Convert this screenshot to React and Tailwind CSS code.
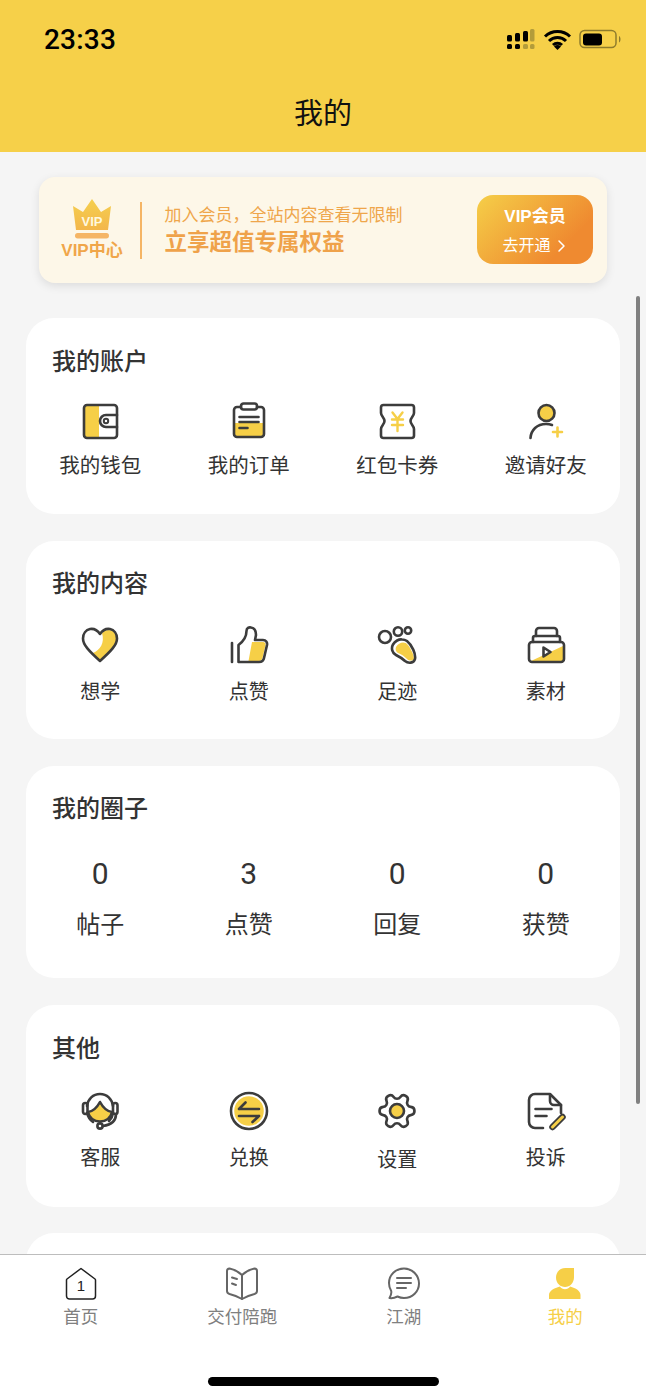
import React from 'react';

const font = { fontFamily: '"Liberation Sans", "Noto Sans CJK SC", sans-serif' };
const DARK = '#3c3c3c';
const YELLOW = '#f6cf47';

const Svg = ({ children, size = 40 }) => (
    <svg width={size} height={size} viewBox={`0 0 ${size} ${size}`} fill="none" stroke={DARK} strokeWidth="2.600" strokeLinecap="round" strokeLinejoin="round">
        {children}
    </svg>
);

const WalletIcon = () => (
    <Svg>
        <rect x="4" y="4" width="15" height="33" fill={YELLOW} stroke="none" />
        <rect x="4" y="4" width="33" height="33" rx="3" />
        <path d="M37 14H26a6 6 0 0 0 0 12h11" />
        <circle cx="26" cy="20" r="2.200" strokeWidth="2" />
    </Svg>
);

const OrderIcon = () => (
    <Svg>
        <path d="M5 22h30v11a3 3 0 0 1-3 3H8a3 3 0 0 1-3-3z" fill={YELLOW} stroke="none" />
        <path d="M12 6H8a3 3 0 0 0-3 3v24a3 3 0 0 0 3 3h24a3 3 0 0 0 3-3V9a3 3 0 0 0-3-3h-4" />
        <rect x="12" y="2.500" width="16" height="6" rx="2.500" />
        <path d="M10.500 16h19M10.500 21h19M10.500 27h8" />
    </Svg>
);

const TicketIcon = () => (
    <Svg>
        <path d="M6.500 4h28A2.500 2.500 0 0 1 37 6.500V12c0 3-3.500 4.500-3.500 8s3.500 5 3.500 8v6.500a2.500 2.500 0 0 1-2.500 2.500h-28A2.500 2.500 0 0 1 4 34.500V28c0-3 3.500-4.500 3.500-8S4 15 4 12V6.500A2.500 2.500 0 0 1 6.500 4z" />
        <path d="M15.500 11.500l5 6.500 5-6.500M15 18.500h11M15 24h11M20.500 18.500V30" stroke={YELLOW} strokeWidth="2.400" />
    </Svg>
);

const InviteIcon = () => (
    <Svg>
        <circle cx="20.500" cy="12" r="8" fill={YELLOW} />
        <path d="M4.500 37C5 29 11 23 20 23c2.500 0 4.500.4 6 1" />
        <path d="M31.500 26.500v9M27 31h9" stroke={YELLOW} strokeWidth="2.600" />
    </Svg>
);

const HeartIcon = () => (
    <Svg>
        <path d="M22 8c4-5 15-4 15 6 0 6-5 11-17 21l-7-7c7-3 12-10 9-20z" fill={YELLOW} stroke="none" />
        <path d="M20 9C17 4.500 13 3.500 10 4 6 4.800 3 8.500 3 13.500 3 20 9 26 20 36 31 26 37 20 37 13.500 37 8.500 34 4.800 30 4c-3-.5-7 .5-10 5z" />
    </Svg>
);

const ThumbIcon = () => (
    <Svg>
        <path d="M23 17h11c2 0 3 1.500 2.500 3l-3 13c-.5 2-2 3-3.500 3H19.500z" fill={YELLOW} stroke="none" />
        <path d="M3 18v19" />
        <path d="M9.500 37V20c4-3 8-8 8-14 0-3 2.500-4 4.500-3.500 4 .5 5 4.500 5 7.500l-1 5h8c3 0 4.500 2.500 4 5l-3 13c-.5 3-3 4-5 4z" />
    </Svg>
);

const PawIcon = () => (
    <Svg>
        <path d="M19 22c3-5 9-6 12-2 3 4 6 10 6 14-1 2-5 2-7 0-3-3-6-5-9-6-2-1-3-4-2-6z" fill={YELLOW} stroke="none" />
        <path d="M25 14.500c-3-.5-7 1.500-9 5-2 3.500-1 8.500 3 10.500 3 1.500 6 3 9 6 3 2.500 9 2.500 10-2 1-5-3-14-8-18-1.500-1-3-1.500-5-1.500z" />
        <circle cx="8" cy="12" r="6" />
        <circle cx="21" cy="6.500" r="4.200" />
        <circle cx="31" cy="5.500" r="3.200" />
    </Svg>
);

const MaterialIcon = () => (
    <Svg>
        <path d="M5 36l32-15v15z" fill={YELLOW} stroke="none" />
        <rect x="3" y="17" width="35" height="20" rx="3" />
        <path d="M7 17v-4a2 2 0 0 1 2-2h23a2 2 0 0 1 2 2v4" />
        <path d="M10 11V6a3 3 0 0 1 3-3h15a3 3 0 0 1 3 3v5" />
        <path d="M17.500 22.500l7 4.500-7 4.500z" />
    </Svg>
);

const ServiceIcon = () => (
    <Svg>
        <path d="M8 21c5-.5 9-4.500 12-10 3 5.500 7 9.500 12 10-1 6-6 9.500-12 9.500S9 27 8 21z" fill={YELLOW} />
        <path d="M7 15C8 8 13 3 20 3s12 5 13 12" />
        <path d="M7 22c1 4 3 7 6 9M33 22c-.5 4-2 6-4 8" />
        <rect x="3" y="12" width="4.500" height="11" rx="2.200" />
        <rect x="33" y="12" width="4.500" height="11" rx="2.200" />
        <path d="M36 23c0 7-5 11-13 12" />
        <circle cx="20" cy="35" r="2.600" />
    </Svg>
);

const ExchangeIcon = () => (
    <Svg>
        <circle cx="20" cy="20" r="14.800" fill={YELLOW} stroke="none" />
        <circle cx="20" cy="20" r="18" />
        <path d="M10 18h20M10 18l6.500-6.500M30 25H10M30 25l-6.500 6" />
    </Svg>
);

const GearIcon = () => (
    <Svg>
        <g transform="translate(-1 -1) scale(1.750) rotate(90 12 12)" strokeWidth="1.500">
            <path d="M9.671 4.136a2.340 2.340 0 0 1 4.659 0 2.340 2.340 0 0 0 3.319 1.915 2.340 2.340 0 0 1 2.330 4.033 2.340 2.340 0 0 0 0 3.831 2.340 2.340 0 0 1-2.330 4.033 2.340 2.340 0 0 0-3.319 1.915 2.340 2.340 0 0 1-4.659 0 2.340 2.340 0 0 0-3.320-1.915 2.340 2.340 0 0 1-2.330-4.033 2.340 2.340 0 0 0 0-3.831A2.340 2.340 0 0 1 6.350 6.051a2.340 2.340 0 0 0 3.319-1.915" />
        </g>
        <circle cx="20" cy="20" r="7" fill={YELLOW} />
    </Svg>
);

const ComplainIcon = () => (
    <Svg>
        <path d="M17 37H9a6 6 0 0 1-6-6V9a6 6 0 0 1 6-6h15l11 11v8" />
        <path d="M24 3.500V10a4 4 0 0 0 4 4h7" />
        <path d="M9.500 18h16M9.500 25h11" />
        <path d="M26.500 36l10-10" stroke={DARK} strokeWidth="6.500" />
        <path d="M26.500 36l10-10" stroke={YELLOW} strokeWidth="3" />
    </Svg>
);

const HomeTab = () => (
    <svg width="36" height="36" viewBox="0 0 36 36" fill="none" stroke="#222" strokeWidth="1.500" strokeLinejoin="round">
        <path d="M18 2.500l14 10.500a1.500 1.500 0 0 1 .5 1.200V30a3 3 0 0 1-3 3h-23a3 3 0 0 1-3-3V14.200a1.500 1.500 0 0 1 .5-1.200z" />
        <text x="18" y="25" textAnchor="middle" fontSize="15" fill="#222" stroke="none" fontFamily="Liberation Sans, sans-serif">1</text>
    </svg>
);

const BookTab = () => (
    <svg width="36" height="36" viewBox="0 0 36 36" fill="none" stroke="#666" strokeWidth="2" strokeLinecap="round" strokeLinejoin="round">
        <path d="M18 9C15 6 10 3.500 5.500 2.500c-1.500 0-2.500 1-2.500 2.500v20c0 1.500 1 2.500 2.500 3 4.500 1 9 3 12.500 5 3.500-2 8-4 12.500-5 1.500-.5 2.500-1.500 2.500-3V5c0-1.500-1-2.500-2.500-2.500C26 3.500 21 6 18 9z" />
        <path d="M18 9v24M8 11.500l5 1.500M8 17.500l4 1.500" />
    </svg>
);

const ChatTab = () => (
    <svg width="36" height="36" viewBox="0 0 36 36" fill="none" stroke="#666" strokeWidth="2" strokeLinecap="round" strokeLinejoin="round">
        <path d="M18 2.500C9.500 2.500 3 9 3 17c0 3 .8 5.500 2 7.500.5 1 .3 4-1.500 7.500 3 .5 6-.5 8-1.500 2 1 4 1.500 6.500 1.500 8.500 0 15-6.500 15-14.500S26.500 2.500 18 2.500z" />
        <path d="M11 12h14M11 17h14M11 22h9" />
    </svg>
);

const MeTab = () => (
    <svg width="36" height="36" viewBox="0 0 36 36" fill={YELLOW}>
        <path d="M18.500 2H27v9c0 6-4 10-9 10s-9-4-9-9.500C9 6 13 2 18.500 2z" />
        <path d="M2 33v-4c0-4 5-7 11-8.500 2 3.500 8 3.500 10 0C29 22 33.500 25 33.500 29v4z" />
    </svg>
);

const StatusIcons = () => (
    <svg width="116" height="24" viewBox="0 0 116 24">
        <g fill="#000">
            <rect x="1" y="8" width="5" height="6.500" rx="1.500" />
            <rect x="9" y="6" width="5" height="8.500" rx="1.500" />
            <rect x="17" y="4" width="5" height="10.500" rx="1.500" />
            <rect x="1" y="17" width="5" height="5" rx="1.500" />
            <rect x="9" y="17" width="5" height="5" rx="1.500" />
        </g>
        <g fill="#b39c3a">
            <rect x="24" y="2" width="4.500" height="12.500" rx="1.500" />
            <rect x="17" y="17" width="5" height="5" rx="1.500" />
            <rect x="24" y="17" width="4.500" height="5" rx="1.500" />
        </g>
        <path d="M39 9.500a18 18 0 0 1 25 0M43 14a12 12 0 0 1 17 0M47 18a6.500 6.500 0 0 1 9 0" fill="none" stroke="#000" strokeWidth="3" />
        <path d="M51.500 23l-3.500-3.500a5 5 0 0 1 7 0z" fill="#000" />
        <rect x="74" y="3.500" width="36" height="17" rx="4.500" fill="none" stroke="#8f7c2c" strokeWidth="1.500" />
        <rect x="77" y="6.500" width="19" height="12" rx="3" fill="#000" />
        <path d="M113 9c2 .5 2 6 0 6.500z" fill="#8f7c2c" />
    </svg>
);

const Crown = () => (
    <svg width="40" height="40" viewBox="0 0 40 40" className="shrink-0">
        <defs>
            <linearGradient id="crown" x1="0" y1="0" x2="0" y2="1">
                <stop offset="0" stopColor="#f5d04f" />
                <stop offset="1" stopColor="#f3b64a" />
            </linearGradient>
        </defs>
        <path d="M20 0l9 13 10-6-3 24H4L1 7l10 6z" fill="url(#crown)" />
        <rect x="3" y="34" width="34" height="5.500" rx="2.700" fill="#f5b565" />
        <text x="20" y="27" textAnchor="middle" fontSize="13" fontWeight="700" fill="#fff8df" fontFamily="Liberation Sans, sans-serif">VIP</text>
    </svg>
);

const accountItems = [
    { icon: WalletIcon, label: '我的钱包' },
    { icon: OrderIcon, label: '我的订单' },
    { icon: TicketIcon, label: '红包卡券' },
    { icon: InviteIcon, label: '邀请好友' },
];

const contentItems = [
    { icon: HeartIcon, label: '想学' },
    { icon: ThumbIcon, label: '点赞' },
    { icon: PawIcon, label: '足迹' },
    { icon: MaterialIcon, label: '素材' },
];

const otherItems = [
    { icon: ServiceIcon, label: '客服' },
    { icon: ExchangeIcon, label: '兑换' },
    { icon: GearIcon, label: '设置', offset: 'mt-[14px]' },
    { icon: ComplainIcon, label: '投诉' },
];

const circleStats = [
    { value: '0', label: '帖子' },
    { value: '3', label: '点赞' },
    { value: '0', label: '回复' },
    { value: '0', label: '获赞' },
];

const tabs = [
    { icon: HomeTab, label: '首页', color: 'text-[#808080]' },
    { icon: BookTab, label: '交付陪跑', color: 'text-[#808080]' },
    { icon: ChatTab, label: '江湖', color: 'text-[#808080]' },
    { icon: MeTab, label: '我的', color: 'text-[#f6cf47]' },
];

const CardTitle = ({ children }) => (
    <h2 className="pl-[26px] text-[24px] leading-[34px] font-medium text-[#333]">{children}</h2>
);

const IconGrid = ({ items, gridClass, labelClass }) => (
    <div className={`grid grid-cols-4 ${gridClass}`}>
        {items.map((item) => (
            <div key={item.label} className="flex flex-col items-center">
                <item.icon />
                <span className={`${item.offset || labelClass} text-[#333] leading-[30px] ${items === accountItems ? 'text-[20.500px]' : 'text-[20px]'}`}>{item.label}</span>
            </div>
        ))}
    </div>
);

export default function App() {
    return (
        <div className="h-[1399px] w-[646px] flex flex-col overflow-hidden bg-[#f5f5f5]" style={font}>
            {/* Header */}
            <header className="h-[152px] shrink-0 bg-[#f6d049]">
                <div className="h-[78px] flex items-center justify-between pl-[44px] pr-[24px]">
                    <span className="pt-[2px] text-[28px] font-medium tracking-[0.2px] text-black" style={{ fontFamily: 'Roboto, sans-serif' }}>23:33</span>
                    <StatusIcons />
                </div>
                <h1 className="h-[74px] flex items-center justify-center text-[29px] font-normal text-[#111]">我的</h1>
            </header>

            {/* Content */}
            <main className="relative flex-1 min-h-0 overflow-hidden">
                <div className="px-[26px] pt-[25px]">
                    <section className="mx-[13px] h-[106px] flex items-center rounded-[16px] bg-[#fdf7e8] shadow-[0_3px_10px_rgba(0,0,0,0.1)]">
                        <div className="ml-[23px] w-[60px] flex flex-col items-center">
                            <Crown />
                            <span className="mt-[1px] text-[17px] leading-[22px] font-bold whitespace-nowrap text-[#f0a64a]">VIP中心</span>
                        </div>
                        <div className="ml-[18px] h-[57px] w-[1.5px] bg-[#f5b565]" />
                        <div className="ml-[23px] mt-[2px]">
                            <p className="text-[17px] leading-[24px] text-[#efa64b]">加入会员，全站内容查看无限制</p>
                            <p className="text-[22.500px] leading-[30px] font-bold text-[#efa24a]">立享超值专属权益</p>
                        </div>
                        <button className="ml-auto mr-[14px] mb-[2px] pt-[4px] h-[69px] w-[116px] rounded-[16px] bg-[linear-gradient(135deg,#f5cf48,#ef8a30_75%)] text-white flex flex-col items-center justify-center gap-[5px]">
                            <span className="text-[17px] leading-[24px] font-bold">VIP会员</span>
                            <span className="flex items-center text-[16px] leading-[24px]">
                                去开通
                                <svg className="ml-[3px]" width="14" height="16" viewBox="0 0 14 16" fill="none" stroke="#fff" strokeWidth="1.500" strokeLinecap="round" strokeLinejoin="round">
                                    <path d="M5 3l5 5-5 5" />
                                </svg>
                            </span>
                        </button>
                    </section>

                    <section className="mt-[35px] rounded-[28px] bg-white pt-[27px] pb-[33px]">
                        <CardTitle>我的账户</CardTitle>
                        <IconGrid items={accountItems} gridClass="mt-[22px]" labelClass="mt-[10px]" />
                    </section>

                    <section className="mt-[27px] rounded-[28px] bg-white pt-[26px] pb-[32px]">
                        <CardTitle>我的内容</CardTitle>
                        <IconGrid items={contentItems} gridClass="mt-[24px]" labelClass="mt-[12px]" />
                    </section>

                    <section className="mt-[27px] rounded-[28px] bg-white pt-[26px] pb-[36px]">
                        <CardTitle>我的圈子</CardTitle>
                        <div className="mt-[28px] grid grid-cols-4">
                            {circleStats.map((stat) => (
                                <div key={stat.label} className="flex flex-col items-center text-[#333]">
                                    <span className="text-[30px] leading-[40px]" style={{ fontFamily: 'Roboto, sans-serif' }}>{stat.value}</span>
                                    <span className="mt-[14px] text-[24px] leading-[34px]">{stat.label}</span>
                                </div>
                            ))}
                        </div>
                    </section>

                    <section className="mt-[27px] rounded-[28px] bg-white pt-[27px] pb-[32px]">
                        <CardTitle>其他</CardTitle>
                        <IconGrid items={otherItems} gridClass="mt-[25px]" labelClass="mt-[12px]" />
                    </section>

                    <section className="mt-[26px] h-[120px] rounded-[28px] bg-white" />
                </div>

                {/* Scrollbar */}
                <div className="absolute left-[636px] top-[144px] h-[808px] w-[4px] rounded-full bg-[#808080]" />
            </main>

            {/* Tab bar */}
            <nav className="h-[145px] shrink-0 border-t border-[#bdbdbd] bg-white">
                <div className="mt-[11px] grid grid-cols-4">
                    {tabs.map((tab) => (
                        <div key={tab.label} className="flex flex-col items-center">
                            <tab.icon />
                            <span className={`text-[17.500px] leading-[24px] mt-[3px] ${tab.color}`}>{tab.label}</span>
                        </div>
                    ))}
                </div>
                <div className="mx-auto mt-[48px] h-[9px] w-[231px] rounded-full bg-black" />
            </nav>
        </div>
    );
}
